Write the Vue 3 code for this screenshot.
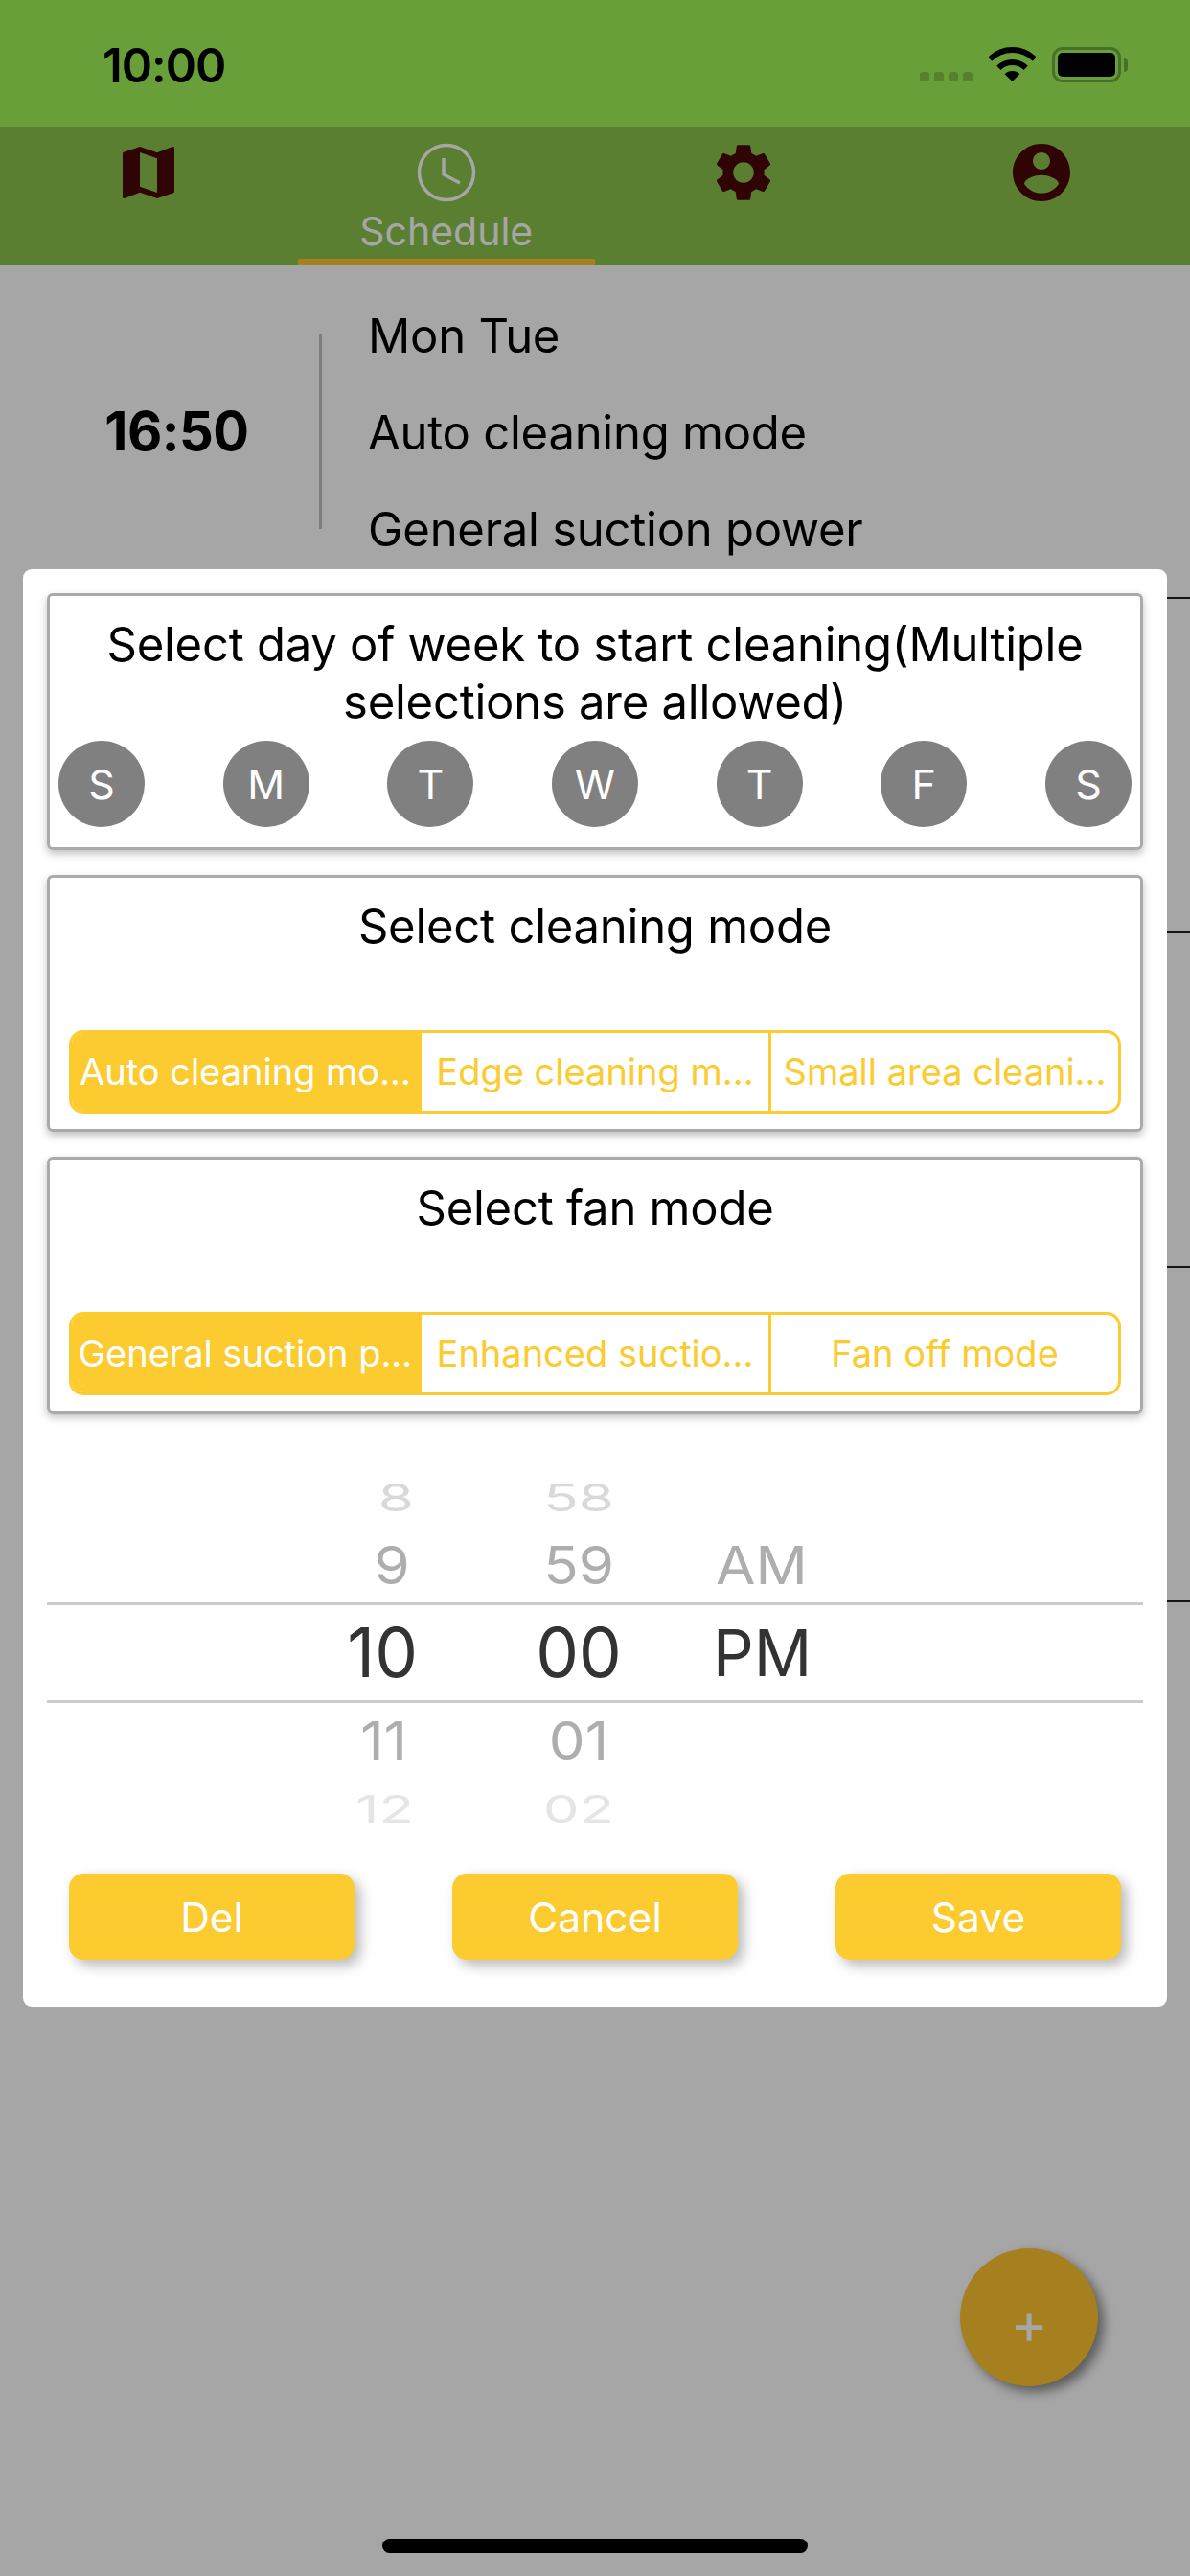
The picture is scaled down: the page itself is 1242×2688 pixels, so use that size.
<template>
  <div class="phone">
    <!-- Status bar -->
    <div class="status-bar">
      <span class="clock">10:00</span>
      <div class="status-icons">
        <div class="signal"><i v-for="n in 4" :key="n"></i></div>
        <svg class="wifi" viewBox="0 0 49 36" width="49" height="36">
          <path d="M1.17 12.67A33 33 0 0 1 47.83 12.67" fill="none" stroke="#000" stroke-width="6" />
          <path d="M10.36 21.86A20 20 0 0 1 38.64 21.86" fill="none" stroke="#000" stroke-width="6" />
          <path d="M24.5 36L16.7 28.2A11 11 0 0 1 32.3 28.2Z" fill="#000" />
        </svg>
        <div class="battery"><div class="battery-fill"></div></div>
        <div class="battery-nub"></div>
      </div>
    </div>

    <!-- Tabs -->
    <nav class="tabs">
      <div v-for="tab in tabs" :key="tab.name" class="tab" :class="{ active: tab.active }">
        <svg v-if="tab.active" class="tab-icon" viewBox="0 0 72 72" width="72" height="72">
          <circle cx="36" cy="36" r="28.5" fill="none" stroke="#fff" stroke-width="3.5" />
          <path d="M33 21V38L50 47" fill="none" stroke="#fff" stroke-width="3.5" />
        </svg>
        <svg v-else class="tab-icon" viewBox="0 0 24 24" width="72" height="72">
          <path :d="tab.icon" fill="#4a0509" />
        </svg>
        <span v-if="tab.active" class="tab-label">{{ tab.name }}</span>
      </div>
    </nav>

    <!-- Schedule list behind the dialog -->
    <div class="list">
      <div class="row">
        <div class="row-time">16:50</div>
        <div class="row-info">
          <div>Mon Tue</div>
          <div>Auto cleaning mode</div>
          <div>General suction power</div>
        </div>
      </div>
      <div v-for="n in 3" :key="n" class="row"></div>
    </div>

    <button class="fab">+</button>

    <!-- Dialog -->
    <div class="backdrop">
      <div class="dialog">
        <section class="card">
          <h3 class="card-title">Select day of week to start cleaning(Multiple selections are allowed)</h3>
          <div class="days">
            <span v-for="(d, i) in days" :key="i" class="day">{{ d }}</span>
          </div>
        </section>

        <section class="card">
          <h3 class="card-title">Select cleaning mode</h3>
          <div class="segments">
            <div v-for="(m, i) in cleanModes" :key="m" class="segment" :class="{ on: i === 0 }">{{ m }}</div>
          </div>
        </section>

        <section class="card">
          <h3 class="card-title">Select fan mode</h3>
          <div class="segments">
            <div v-for="(m, i) in fanModes" :key="m" class="segment" :class="{ on: i === 0 }">{{ m }}</div>
          </div>
        </section>

        <div class="wheel">
          <div class="wheel-line"></div>
          <div class="wheel-col hours">
            <div v-for="h in hours" :key="h.t" class="wheel-item" :class="h.c"><span>{{ h.t }}</span></div>
          </div>
          <div class="wheel-col minutes">
            <div v-for="m in minutes" :key="m.t" class="wheel-item" :class="m.c"><span>{{ m.t }}</span></div>
          </div>
          <div class="wheel-col ampm">
            <div class="wheel-item far-top"></div>
            <div class="wheel-item near-top"><span>AM</span></div>
            <div class="wheel-item sel"><span>PM</span></div>
          </div>
        </div>

        <div class="actions">
          <button v-for="b in actions" :key="b" class="action">{{ b }}</button>
        </div>
      </div>
    </div>

    <div class="home-bar"></div>
  </div>
</template>

<script setup>
const tabs = [
  { name: 'Map', icon: 'M20.5 3l-.16.03L15 5.1 9 3 3.36 4.9c-.21.07-.36.25-.36.48V20.5c0 .28.22.5.5.5l.16-.03L9 18.9l6 2.1 5.64-1.9c.21-.07.36-.25.36-.48V3.5c0-.28-.22-.5-.5-.5zM15 19l-6-2.11V5l6 2.11V19z' },
  { name: 'Schedule', active: true },
  { name: 'Settings', icon: 'M19.14 12.94c.04-.3.06-.61.06-.94 0-.32-.02-.64-.07-.94l2.03-1.58c.18-.14.23-.41.12-.61l-1.92-3.32c-.12-.22-.37-.29-.59-.22l-2.39.96c-.5-.38-1.03-.7-1.62-.94l-.36-2.54c-.04-.24-.24-.41-.48-.41h-3.84c-.24 0-.43.17-.47.41l-.36 2.54c-.59.24-1.13.57-1.62.94l-2.39-.96c-.22-.08-.47 0-.59.22L2.74 8.87c-.12.21-.08.47.12.61l2.03 1.58c-.05.3-.09.63-.09.94s.02.64.07.94l-2.03 1.58c-.18.14-.23.41-.12.61l1.92 3.32c.12.22.37.29.59.22l2.39-.96c.5.38 1.03.7 1.62.94l.36 2.54c.05.24.24.41.48.41h3.84c.24 0 .44-.17.47-.41l.36-2.54c.59-.24 1.13-.56 1.62-.94l2.39.96c.22.08.47 0 .59-.22l1.92-3.32c.12-.22.07-.47-.12-.61l-2.01-1.58zM12 15.6c-1.98 0-3.6-1.62-3.6-3.6s1.62-3.6 3.6-3.6 3.6 1.62 3.6 3.6-1.62 3.6-3.6 3.6z' },
  { name: 'Account', icon: 'M12 2C6.48 2 2 6.48 2 12s4.48 10 10 10 10-4.48 10-10S17.52 2 12 2zm0 3c1.66 0 3 1.34 3 3s-1.34 3-3 3-3-1.34-3-3 1.34-3 3-3zm0 14.2c-2.5 0-4.71-1.28-6-3.22.03-1.99 4-3.08 6-3.08 1.99 0 5.97 1.09 6 3.08-1.29 1.94-3.5 3.22-6 3.22z' }
]

const days = ['S', 'M', 'T', 'W', 'T', 'F', 'S']
const cleanModes = ['Auto cleaning mo...', 'Edge cleaning m...', 'Small area cleani...']
const fanModes = ['General suction p...', 'Enhanced suctio...', 'Fan off mode']

const hours = [
  { t: '8', c: 'far-top' },
  { t: '9', c: 'near-top' },
  { t: '10', c: 'sel' },
  { t: '11', c: 'near-bottom' },
  { t: '12', c: 'far-bottom' }
]
const minutes = [
  { t: '58', c: 'far-top' },
  { t: '59', c: 'near-top' },
  { t: '00', c: 'sel' },
  { t: '01', c: 'near-bottom' },
  { t: '02', c: 'far-bottom' }
]
const actions = ['Del', 'Cancel', 'Save']
</script>

<style>
html, body { margin: 0; background: #fff; }
</style>

<style scoped>
.phone {
  position: relative;
  width: 1242px;
  height: 2688px;
  overflow: hidden;
  background: #fff;
  font-family: Inter, "Liberation Sans", sans-serif;
  color: #000;
}

/* status bar stays above the backdrop */
.status-bar {
  position: relative;
  z-index: 3;
  height: 132px;
  box-sizing: border-box;
  background: #689f38;
  display: flex;
  align-items: flex-start;
  justify-content: space-between;
  padding: 0 65px 0 107px;
}
.clock { font-size: 49px; font-weight: 600; line-height: 137px; letter-spacing: -1px; }
.status-icons { display: flex; align-items: flex-start; padding-top: 49px; }
.signal { display: flex; gap: 5px; margin-top: 26px; margin-right: 17px; }
.signal i { width: 10px; height: 10px; border-radius: 3px; background: #55802f; }
.wifi { margin-right: 17px; }
.battery {
  width: 72px;
  height: 37px;
  box-sizing: border-box;
  border: 3px solid #47702a;
  border-radius: 11px;
  padding: 3px;
}
.battery-fill { height: 100%; background: #000; border-radius: 5px; }
.battery-nub {
  width: 4px;
  height: 14px;
  margin: 12px 0 0 3px;
  background: #47702a;
  border-radius: 0 4px 4px 0;
}

.tabs { display: flex; height: 144px; background: #8bc34a; }
.tab {
  flex: 1;
  display: flex;
  flex-direction: column;
  align-items: center;
  padding-top: 12px;
  box-sizing: border-box;
}
.tab.active { border-bottom: 6px solid #ffc530; }
.tab-icon { display: block; flex-shrink: 0; }
.tab-label { color: #fff; font-size: 41px; line-height: 50px; }

.row {
  height: 349px;
  margin-left: 36px;
  box-sizing: border-box;
  border-bottom: 2px solid #222;
  display: flex;
  align-items: center;
}
.row-time {
  width: 297px;
  text-align: center;
  font-size: 56px;
  font-weight: 700;
  letter-spacing: -0.5px;
}
.row-info {
  height: 204px;
  border-left: 3px solid #c4c4c4;
  padding-left: 48px;
  display: flex;
  flex-direction: column;
  justify-content: center;
  font-size: 49px;
  letter-spacing: -0.25px;
}
.row-info div { line-height: 101px; white-space: nowrap; position: relative; top: 2px; }

.fab {
  position: absolute;
  left: 1002px;
  top: 2346px;
  width: 144px;
  height: 144px;
  padding: 0;
  border: none;
  border-radius: 50%;
  background: #ffc530;
  color: #fff;
  font-family: inherit;
  font-size: 60px;
  line-height: 156px;
  box-shadow: 6px 6px 12px rgba(0, 0, 0, 0.45);
}

.backdrop {
  position: absolute;
  inset: 0;
  z-index: 2;
  background: rgba(0, 0, 0, 0.35);
  display: flex;
  align-items: center;
  justify-content: center;
}
.dialog {
  width: 1194px;
  height: 1500px;
  box-sizing: border-box;
  background: #fff;
  border-radius: 9px;
  padding: 25px 25px 0;
  display: flex;
  flex-direction: column;
  gap: 26px;
}
.card {
  height: 268px;
  box-sizing: border-box;
  border: 3px solid #aaa;
  border-radius: 6px;
  box-shadow: 0 4px 8px rgba(0, 0, 0, 0.25);
  padding: 21px 20px 16px;
  display: flex;
  flex-direction: column;
  justify-content: space-between;
}
.card-title {
  margin: 0;
  font-size: 49px;
  font-weight: 400;
  line-height: 60px;
  letter-spacing: -0.25px;
  text-align: center;
}
.days {
  display: flex;
  justify-content: space-between;
  margin: 0 -11px 5px;
}
.day {
  width: 90px;
  height: 90px;
  border-radius: 50%;
  background: #808080;
  color: #fff;
  font-size: 43px;
  display: flex;
  align-items: center;
  justify-content: center;
}
.segments {
  display: flex;
  height: 87px;
  box-sizing: border-box;
  border: 3px solid #fbcb30;
  border-radius: 15px;
  overflow: hidden;
}
.segment {
  flex: 1;
  min-width: 0;
  box-sizing: border-box;
  color: #fbcb30;
  font-size: 38px;
  line-height: 81px;
  text-align: center;
  white-space: nowrap;
}
.segment + .segment { border-left: 3px solid #fbcb30; }
.segment.on { background: #fbcb30; color: #fff; }

.wheel {
  position: relative;
  display: flex;
  height: 389px;
  margin-top: 29px;
  font-size: 69px;
}
.wheel-line {
  position: absolute;
  left: 0;
  right: 0;
  top: 142px;
  height: 105px;
  box-sizing: border-box;
  border-top: 3px solid #ccc;
  border-bottom: 3px solid #ccc;
}
.wheel-col { display: flex; flex-direction: column; }
.hours { width: 383px; text-align: right; }
.minutes { width: 100px; margin-left: 122px; text-align: center; }
.ampm { width: 120px; margin-left: 93px; }
.wheel-item { display: flex; align-items: center; }
.wheel-item span { display: block; width: 100%; white-space: nowrap; }
.sel { height: 105px; color: #333; font-size: 71px; line-height: 105px; }
.hours .sel span { transform: translateX(4px); }
.ampm .sel { font-size: 67px; }
.ampm .sel span { margin-left: -3px; }
.near-top, .near-bottom { height: 78px; color: #aeaeae; }
.far-top, .far-bottom { height: 64px; color: #d9d9d9; }
.far-bottom { color: #e5e5e5; }
.near-top span, .near-bottom span { transform: scale(0.87, 0.8); }
.far-top span, .far-bottom span { transform: scale(0.87, 0.58); }
.hours span { transform-origin: right center; }
.ampm span { transform-origin: left center; }
.hours .near-top span { padding-right: 5px; box-sizing: border-box; }
.hours .near-bottom span { padding-right: 8px; box-sizing: border-box; }

.actions {
  display: flex;
  justify-content: space-between;
  padding: 0 23px;
  margin-top: 10px;
}
.action {
  width: 298px;
  height: 90px;
  border: none;
  border-radius: 15px;
  background: #fbcb30;
  color: #fff;
  font-family: inherit;
  font-size: 42.5px;
  box-shadow: 6px 6px 14px rgba(0, 0, 0, 0.28);
}

.home-bar {
  position: absolute;
  z-index: 3;
  left: 399px;
  bottom: 24px;
  width: 444px;
  height: 15px;
  border-radius: 8px;
  background: #000;
}
</style>
